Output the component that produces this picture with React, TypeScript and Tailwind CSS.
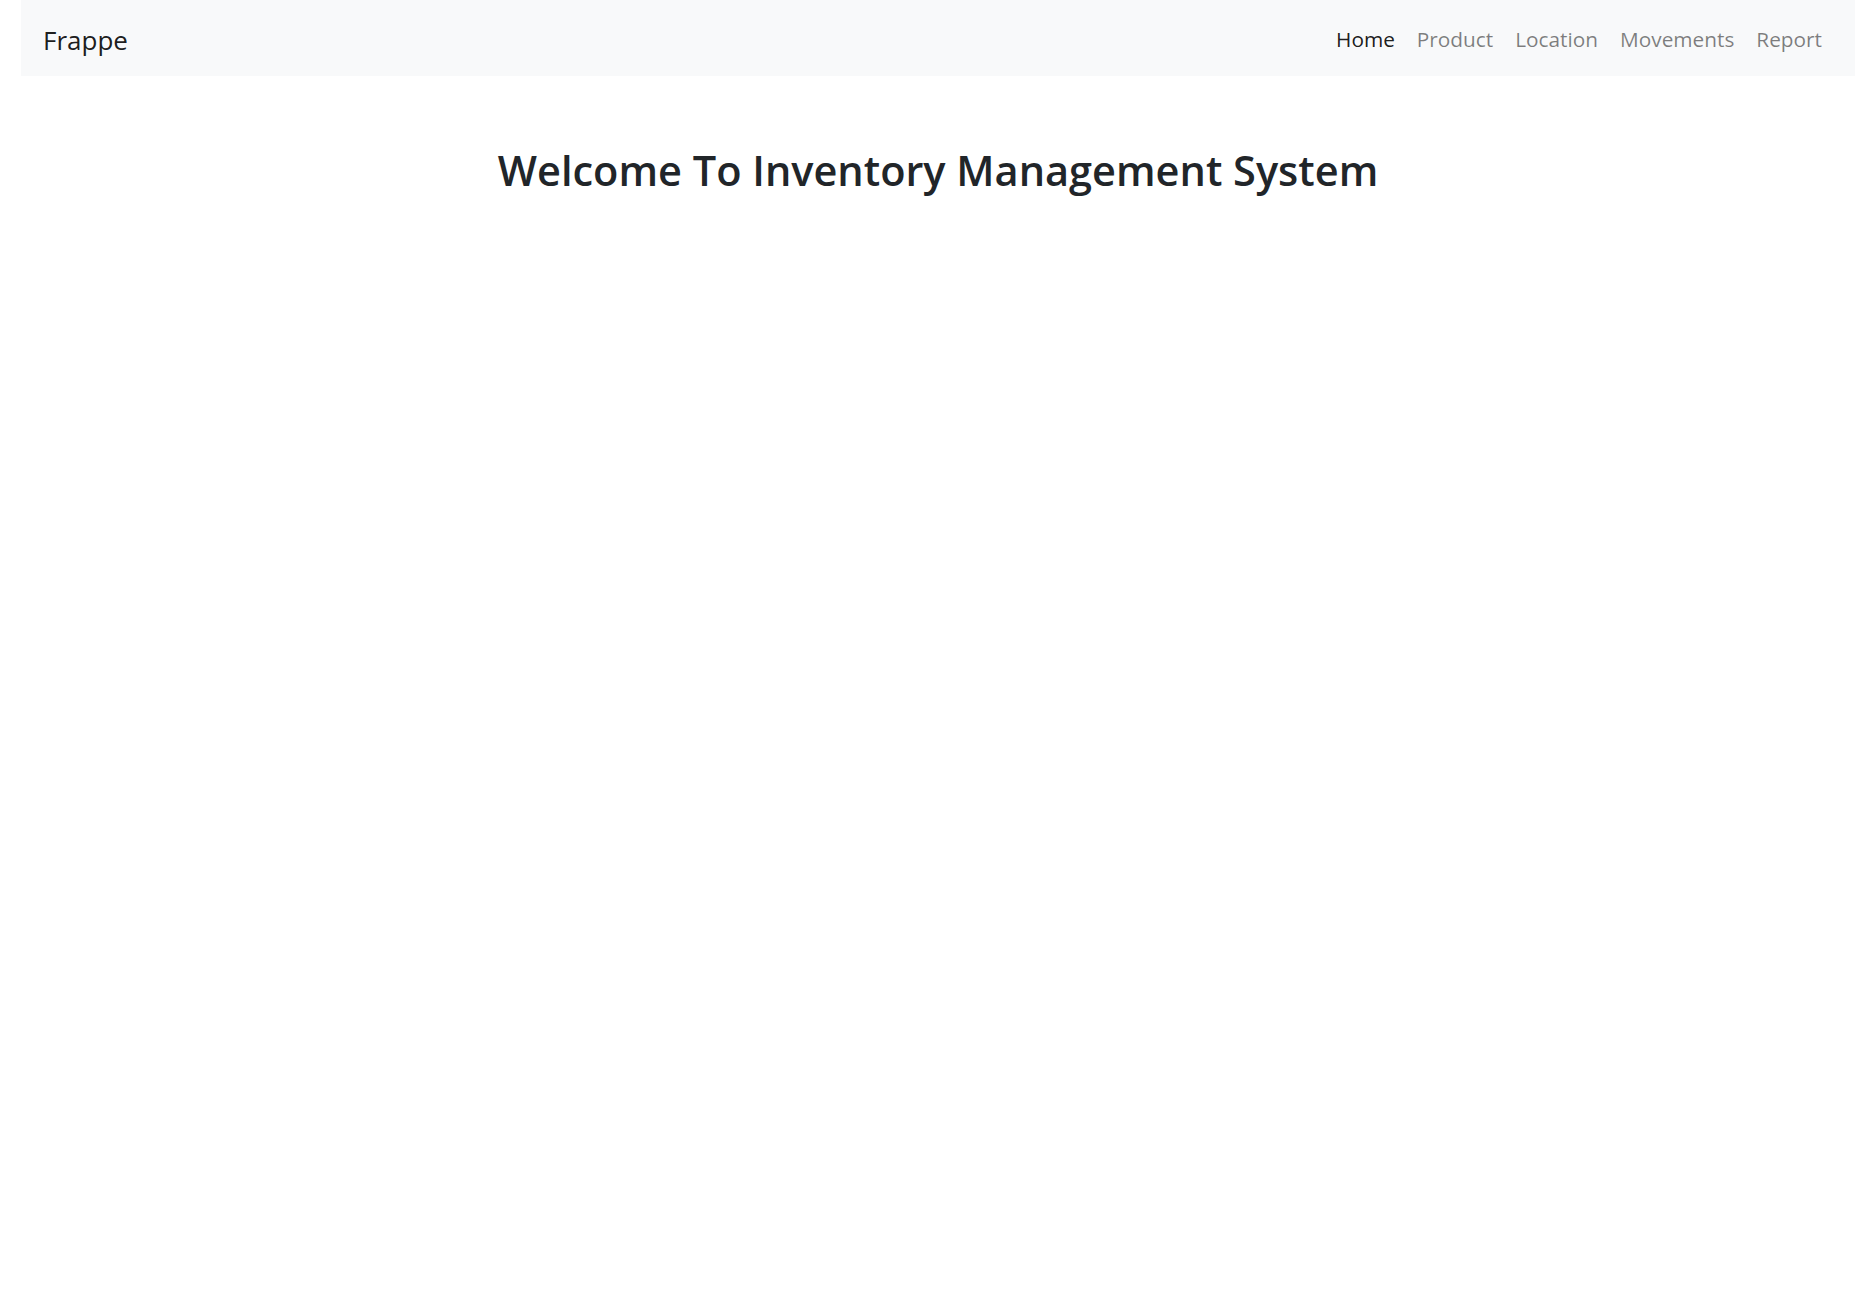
export default function App() {
  const links = ["Home", "Product", "Location", "Movements", "Report"];

  return (
    <div className="min-h-screen bg-white px-[21px] font-['Open_Sans',sans-serif]">
      <nav className="flex h-[76px] items-center justify-between bg-[#f8f9fa] px-[22px]">
        <a className="pt-[4px] text-[26px] text-black/90">Frappe</a>
        <ul className="flex items-center pt-[4px]">
          {links.map((l, i) => (
            <li key={l}>
              <a className={`block px-[11px] text-[20.8px] ${i === 0 ? "text-black/90" : "text-black/50"}`}>
                {l}
              </a>
            </li>
          ))}
        </ul>
      </nav>

      <h2 className="mt-[70px] text-center text-[41.5px] leading-[1.2] font-semibold text-[#212529]">
        Welcome To Inventory Management System
      </h2>
    </div>
  );
}
